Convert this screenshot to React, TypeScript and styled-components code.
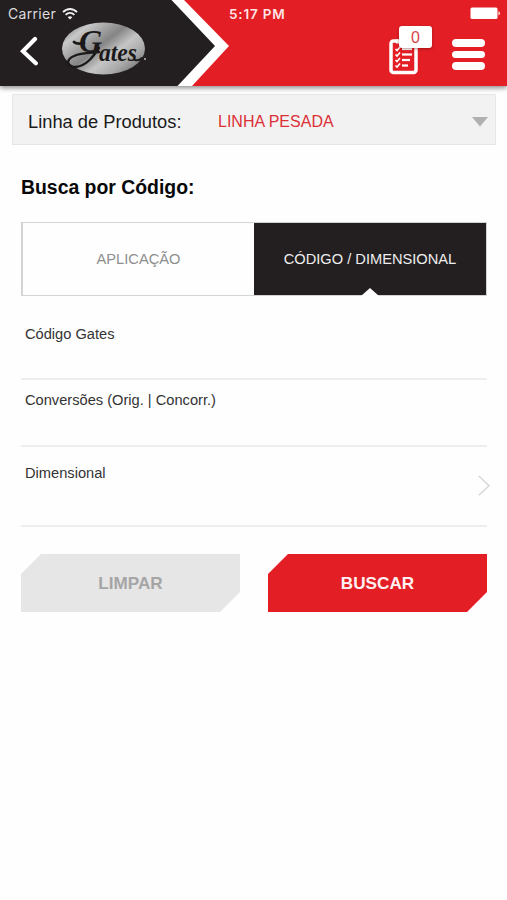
import React from "react";
import styled, { createGlobalStyle } from "styled-components";

const GlobalStyle = createGlobalStyle`
  * { box-sizing: border-box; }
  body { margin: 0; background: #fefefe; }
  button { border: 0; padding: 0; background: none; font: inherit; color: inherit; }
  svg { display: block; flex: none; }
`;

const Screen = styled.div`
  width: 507px;
  height: 900px;
  overflow: hidden;
  background: #fefefe;
  font-family: "Liberation Sans", Arial, sans-serif;
  white-space: nowrap;
`;

const Header = styled.header`
  display: flex;
  height: 86px;
  background: #e31e25;
  box-shadow: 0 2px 5px rgba(0, 0, 0, 0.45);
  position: relative;
`;

const BrandEdge = styled.div`
  width: 229px;
  background: #fff;
  clip-path: polygon(0 0, 184px 0, 229px 46px, 192px 86px, 0 86px);
`;

const Brand = styled.div`
  width: 215px;
  height: 86px;
  background: #231f20;
  clip-path: polygon(0 0, 171.5px 0, 215px 46px, 177.5px 86px, 0 86px);
`;

const Status = styled.div`
  display: flex;
  align-items: center;
  height: 26px;
  font-family: Inter, sans-serif;
  color: #fff;
`;

const Carrier = styled(Status)`
  padding: 1px 0 0 8px;
  gap: 6px;
  font-size: 14px;
  letter-spacing: 0.3px;
  color: #dedcdd;
`;

const Clock = styled(Status)`
  justify-content: space-between;
  padding: 1px 7px 0 0;
  font-size: 13.5px;
  font-weight: 600;
  letter-spacing: 0.8px;
  color: #ffe4e4;
`;

const BrandRow = styled.div`
  display: flex;
  align-items: flex-start;
  padding-left: 20px;
  gap: 23px;
`;

const BackButton = styled.button`
  padding-top: 10px;
`;

const LogoBox = styled.div`
  margin-top: -5px;
`;

const HeaderRight = styled.div`
  flex: 1;
`;

const Actions = styled.div`
  display: flex;
  justify-content: flex-end;
  gap: 19px;
  padding-right: 22px;
`;

const ListButton = styled.button`
  position: relative;
  width: 44px;
  height: 50px;
  padding-top: 9px;
`;

const Count = styled.span`
  position: absolute;
  left: 10px;
  top: 0;
  width: 33px;
  height: 22px;
  border-radius: 3px;
  background: #fff;
  color: #d8454b;
  font-size: 16px;
  line-height: 23px;
  text-align: center;
  box-shadow: 0 1px 3px rgba(90, 0, 0, 0.45);
`;

const MenuButton = styled.button`
  display: flex;
  flex-direction: column;
  gap: 4px;
  padding-top: 13px;
  height: 50px;
`;

const MenuBar = styled.span`
  width: 33px;
  height: 7.5px;
  border-radius: 4px;
  background: #fff;
`;

const ProductLine = styled.button`
  display: grid;
  grid-template-columns: 190px 1fr 16px;
  align-items: center;
  width: 484px;
  height: 51px;
  margin: 8px 0 0 12px;
  padding: 5px 7px 0 15px;
  border: 1px solid #e5e7e6;
  background: #f2f2f2;
  text-align: left;
`;

const ProductLabel = styled.span`
  font-size: 18.3px;
  color: #1a1a1a;
`;

const ProductValue = styled.span`
  font-size: 16px;
  color: #dc3037;
`;

const Content = styled.main`
  width: 466px;
  margin-left: 21px;
`;

const Title = styled.h1`
  margin: 30px 0 0;
  font-size: 19.4px;
  line-height: 24px;
  font-weight: 700;
  color: #080808;
`;

const Tabs = styled.div`
  display: grid;
  grid-template-columns: 231px 1fr;
  height: 74px;
  margin-top: 23px;
  border: solid #d3d3d3;
  border-width: 1px 1px 1px 2px;
`;

const Tab = styled.button<{ $active?: boolean }>`
  position: relative;
  font-size: 14.65px;
  color: ${(p) => (p.$active ? "#eeeeee" : "#8e8e8e")};
  background: ${(p) => (p.$active ? "#231f20" : "#fefefe")};
`;

const Notch = styled.span`
  position: absolute;
  bottom: -1px;
  left: calc(50% - 9px);
  width: 18px;
  height: 8px;
  background: #fefefe;
  clip-path: polygon(50% 0, 100% 100%, 0 100%);
`;

const Field = styled.label<{ $height: number; $top: number }>`
  display: flex;
  justify-content: space-between;
  height: ${(p) => p.$height}px;
  padding: ${(p) => p.$top}px 0 0 4px;
  border-bottom: 2px solid #eeeeee;
  font-size: 14.65px;
  line-height: 18px;
  color: #333;
`;

const ChevronBox = styled.span`
  margin: 11px -3px 0 0;
`;

const Buttons = styled.div`
  display: grid;
  grid-template-columns: 219px 219px;
  justify-content: space-between;
  margin-top: 27px;
`;

const Action = styled.button<{ $primary?: boolean }>`
  height: 58px;
  font-size: 17.15px;
  font-weight: 700;
  color: ${(p) => (p.$primary ? "#fff1f1" : "#a5a5a5")};
  background: ${(p) => (p.$primary ? "#e31e25" : "#e6e6e6")};
  clip-path: polygon(20px 0, 100% 0, 100% 38px, calc(100% - 20px) 100%, 0 100%, 0 20px);
`;

const WifiIcon = () => (
  <svg width="16" height="12" viewBox="0 0 16 12" fill="none" stroke="#eee" strokeWidth="1.9">
    <path d="M1 4.2C5-.1 11-.1 15 4.2" />
    <path d="M3.6 6.9c2.6-2.7 6.2-2.7 8.8 0" />
    <path d="M8 11.6 5.7 9.2c1.4-1.3 3.2-1.3 4.6 0z" fill="#eee" stroke="none" />
  </svg>
);

const BatteryIcon = () => (
  <svg width="30" height="13" viewBox="0 0 30 13" fill="#fff">
    <rect x="0.5" y="0.5" width="27" height="11.5" rx="1.5" />
    <path d="M28.5 4.3c1.8.5 1.8 3.6 0 4.1z" />
  </svg>
);

const BackIcon = () => (
  <svg width="19" height="30" viewBox="0 0 19 30" fill="none" stroke="#fff" strokeWidth="4.2">
    <path d="M15 3 2.9 15.2 15.8 27.2" strokeLinecap="round" />
  </svg>
);

const GatesLogo = () => (
  <svg width="86" height="56" viewBox="0 0 86 56">
    <defs>
      <linearGradient id="metal" x1="0" y1="0.1" x2="1" y2="0.9">
        <stop offset="0" stopColor="#777" />
        <stop offset="0.17" stopColor="#c8c8c8" />
        <stop offset="0.32" stopColor="#a2a2a2" />
        <stop offset="0.45" stopColor="#858585" />
        <stop offset="0.62" stopColor="#c5c5c5" />
        <stop offset="0.78" stopColor="#aaa" />
        <stop offset="1" stopColor="#656565" />
      </linearGradient>
    </defs>
    <ellipse cx="41.5" cy="27.5" rx="41.5" ry="26" fill="url(#metal)" />
    <text
      fontFamily="Liberation Serif, serif"
      fontStyle="italic"
      fontWeight="700"
      fill="#1c191a"
    >
      <tspan x="17" y="31" fontSize="32">G</tspan>
      <tspan x="37" y="40" fontSize="25" textLength="38" lengthAdjust="spacingAndGlyphs">ates</tspan>
    </text>
    <g fill="none" stroke="#1c191a" strokeLinecap="round">
      <path d="M12 21C14 23 18 23 22 22" strokeWidth="2.8" />
      <path d="M37 27C31 36 24 45 14 46C5 46 3 39 12 35C20 31 28 32 37 31" strokeWidth="2.3" />
      <path d="M73 39C76 40 78 39 80 37" strokeWidth="2" />
    </g>
    <circle cx="83" cy="38" r="1" fill="#bbb" />
  </svg>
);

const ListIcon = () => (
  <svg width="30" height="38" viewBox="0 0 30 38" fill="none" stroke="#fff">
    <rect x="2" y="4" width="25" height="31.5" rx="2.5" strokeWidth="3.5" />
    <path d="M7 6.5V2.5h14v4z" fill="#fff" stroke="none" />
    {[12, 17.5, 23, 28.5].map((y, i) => (
      <g key={y}>
        <path d={`M6.5 ${y}l1.5 1.5 3-3.5`} strokeWidth="1.6" />
        <path d={`M13 ${y}h${i === 3 ? 6 : i === 2 ? 8 : 10}`} strokeWidth="2.2" />
      </g>
    ))}
  </svg>
);

const DropIcon = () => (
  <svg width="16" height="10" viewBox="0 0 16 10">
    <path d="M0 0h16L8 9.5z" fill="#b0b0b0" />
  </svg>
);

const ChevronIcon = () => (
  <svg width="12" height="21" viewBox="0 0 12 21" fill="none" stroke="#d8d8d8" strokeWidth="1.5">
    <path d="M.8 1 11 10.7.8 20.3" />
  </svg>
);

export default function App() {
  return (
    <Screen>
      <GlobalStyle />
      <Header>
        <BrandEdge>
          <Brand>
            <Carrier>
              <span>Carrier</span>
              <WifiIcon />
            </Carrier>
            <BrandRow>
              <BackButton aria-label="Voltar">
                <BackIcon />
              </BackButton>
              <LogoBox>
                <GatesLogo />
              </LogoBox>
            </BrandRow>
          </Brand>
        </BrandEdge>
        <HeaderRight>
          <Clock>
            <span>5:17 PM</span>
            <BatteryIcon />
          </Clock>
          <Actions>
            <ListButton aria-label="Lista">
              <ListIcon />
              <Count>0</Count>
            </ListButton>
            <MenuButton aria-label="Menu">
              <MenuBar />
              <MenuBar />
              <MenuBar />
            </MenuButton>
          </Actions>
        </HeaderRight>
      </Header>
      <ProductLine>
        <ProductLabel>Linha de Produtos:</ProductLabel>
        <ProductValue>LINHA PESADA</ProductValue>
        <DropIcon />
      </ProductLine>
      <Content>
        <Title>Busca por Código:</Title>
        <Tabs>
          <Tab>APLICAÇÃO</Tab>
          <Tab $active>
            CÓDIGO / DIMENSIONAL
            <Notch />
          </Tab>
        </Tabs>
        <Field $height={84} $top={29}>Código Gates</Field>
        <Field $height={67} $top={11}>Conversões (Orig. | Concorr.)</Field>
        <Field $height={80} $top={17}>
          Dimensional
          <ChevronBox>
            <ChevronIcon />
          </ChevronBox>
        </Field>
        <Buttons>
          <Action>LIMPAR</Action>
          <Action $primary>BUSCAR</Action>
        </Buttons>
      </Content>
    </Screen>
  );
}
